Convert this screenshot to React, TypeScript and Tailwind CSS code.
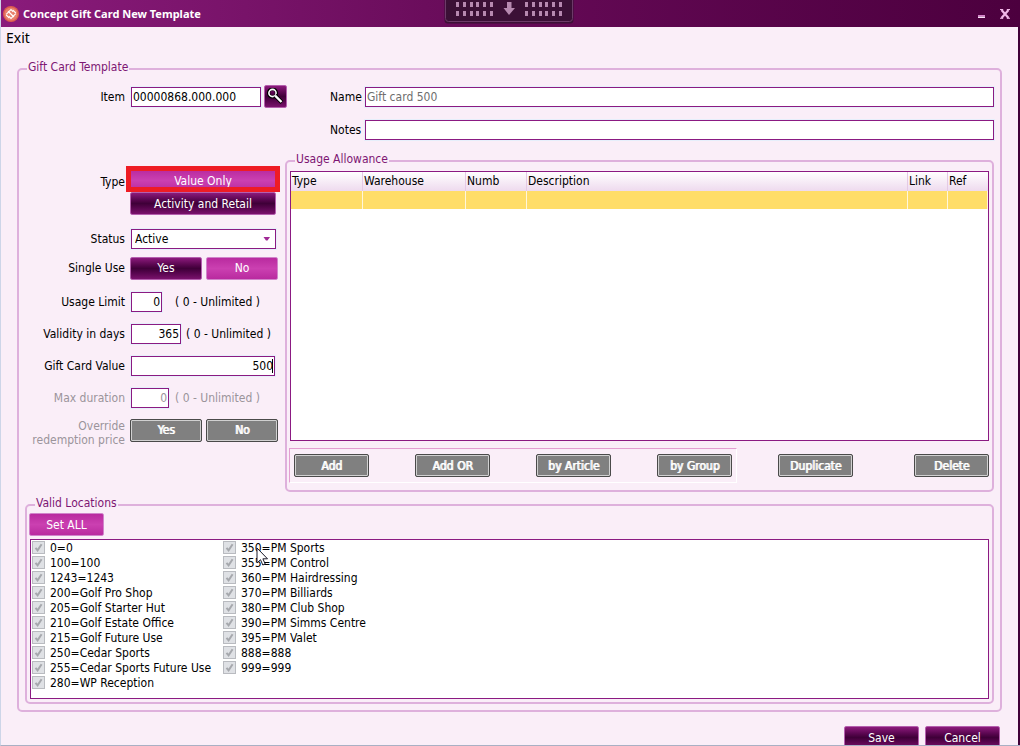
import type { ReactNode } from "react";

const columnOne = [
  "0=0",
  "100=100",
  "1243=1243",
  "200=Golf Pro Shop",
  "205=Golf Starter Hut",
  "210=Golf Estate Office",
  "215=Golf Future Use",
  "250=Cedar Sports",
  "255=Cedar Sports Future Use",
  "280=WP Reception",
];
const columnTwo = [
  "350=PM Sports",
  "355=PM Control",
  "360=PM Hairdressing",
  "370=PM Billiards",
  "380=PM Club Shop",
  "390=PM Simms Centre",
  "395=PM Valet",
  "888=888",
  "999=999",
];

const inputClass =
  "ml-px h-5 border border-[#8b1a82] bg-white px-px leading-none outline-1 outline-[#e6effb]";
const groupClass =
  "flex min-w-0 flex-col rounded-[5px] border-2 border-[#deb0dc]";
const legendClass = "h-4 px-px leading-[13px] text-[#7d1673]";

const tones = {
  dark: "rounded-[2px] border border-[#b45fae] bg-linear-to-b from-[#8c1a7c] via-[#3f0038] to-[#7a126c] text-white",
  bright:
    "rounded-[2px] border border-[#d184cb] bg-linear-to-b from-[#b92a9f] via-[#cb40b1] to-[#b92a9f] text-white",
  gray: "rounded-[2px] border border-[#4a4a4a] bg-[#808080] text-white inset-ring inset-ring-[#d0d0d0] [text-shadow:1px_0_0_#fff]",
};

function Btn({
  tone,
  width,
  children,
}: {
  tone: keyof typeof tones;
  width: string;
  children: ReactNode;
}) {
  return (
    <button
      type="button"
      disabled={tone === "gray"}
      className={`h-[23px] shrink-0 leading-none ${width} ${tones[tone]}`}
    >
      {children}
    </button>
  );
}

function Row({
  label,
  id,
  height = "h-8",
  muted = false,
  children,
}: {
  label: ReactNode;
  id?: string;
  height?: string;
  muted?: boolean;
  children: ReactNode;
}) {
  const labelClass = "w-[101px] shrink-0 pr-px text-right leading-[14px]";
  return (
    <div
      className={`flex items-center gap-1 whitespace-nowrap ${height} ${muted ? "text-[#9b949b]" : ""}`}
    >
      {id ? (
        <label htmlFor={id} className={labelClass}>
          {label}
        </label>
      ) : (
        <span className={labelClass}>{label}</span>
      )}
      {children}
    </div>
  );
}

function Location({ name }: { name: string }) {
  return (
    <label className="flex h-[15px] items-center gap-[5px] whitespace-nowrap">
      <span className="relative size-[13px] shrink-0">
        <input
          type="checkbox"
          defaultChecked
          disabled
          className="block size-[13px] appearance-none border border-[#b9bbc0] bg-[#dfe1e5]"
        />
        <svg viewBox="0 0 13 13" className="absolute inset-0 size-[13px]">
          <path d="M3.5 6.8 5.6 9.4 9.6 3.2" fill="none" stroke="#a6a8ad" strokeWidth="2" />
        </svg>
      </span>
      {name}
    </label>
  );
}

function Grip({ x }: { x: number }) {
  return (
    <>
      {[2, 11].map((y) =>
        [0, 7, 14, 20, 27, 34].map((dx) => (
          <rect key={`${y}-${dx}`} x={x + dx} y={y} width="3" height="5" fill="#b689b0" />
        )),
      )}
    </>
  );
}

function TitleBar() {
  return (
    <header className="relative flex h-[27px] shrink-0 items-center bg-linear-to-r from-[#8a1b7b] via-[#650a56] to-[#4c003e] pl-0.5 text-white">
      <svg viewBox="0 0 16 16" className="size-4">
        <circle cx="8" cy="8" r="8" fill="#dd5d4e" />
        <circle cx="8" cy="8" r="6.6" fill="#e8806d" />
        <g fill="none" stroke="#fff" strokeWidth="1.1">
          <path d="M3.200 8.400 8 3.600 10.200 5.800M12.800 7.600 8 12.400 5.800 10.200" />
          <path d="M5 5.200 9.800 10M6.400 6.400 11 11M9.600 3.800 12.800 7M3.200 9 6.400 12.200" />
        </g>
      </svg>
      <h1 className="ml-1 font-['Noto_Sans','Open_Sans',sans-serif] text-[11px] leading-4 font-bold">
        Concept Gift Card New Template
      </h1>
      <div className="ml-auto flex items-center gap-[14px] pr-2.5">
        <button type="button" aria-label="Minimize">
          <svg viewBox="0 0 8 10" className="h-2.5 w-2">
            <path d="M0 6h7v1.500H0z" fill="#d884ce" />
            <path d="M0 7.500h7V9H0z" fill="#fbe0f7" />
          </svg>
        </button>
        <button type="button" aria-label="Close">
          <svg viewBox="0 0 10 10" className="size-[10px]">
            <path d="M1.500 1 8.500 9M8.500 1 1.500 9" stroke="#f0b6e8" strokeWidth="2.200" />
            <path d="M0 .5h3.200M6.800.5H10M0 9.300h3.200M6.800 9.300H10" stroke="#f0b6e8" />
          </svg>
        </button>
      </div>
      <svg viewBox="0 0 130 24" className="absolute top-0 left-[443px] h-6 w-[130px]">
        <path
          d="M.5 0v20a3.500 3.500 0 0 0 3.500 3.500h122a3.500 3.500 0 0 0 3.500-3.500V0z"
          fill="#3b1036"
        />
        <path
          d="M1.500 0v18.500a3 3 0 0 0 3 3h121a3 3 0 0 0 3-3V0"
          fill="none"
          stroke="#6c3b68"
        />
        <Grip x={12} />
        <Grip x={81} />
        <path d="M63 2h4.500v6H71L65 15 59.500 8H63z" fill="#b689b0" />
      </svg>
    </header>
  );
}

function UsageTable() {
  const th = "border-r border-[#e5c9e5] pl-px text-left font-normal last:border-r-0";
  const cols = ["Type", "Warehouse", "Numb", "Description", "Link", "Ref"];
  return (
    <div className="mx-px min-h-32 flex-1 border border-[#8b1a82] bg-white">
      <table className="w-full table-fixed border-separate border-spacing-0">
        <colgroup>
          <col className="w-[72px]" />
          <col className="w-[103px]" />
          <col className="w-[61px]" />
          <col />
          <col className="w-10" />
          <col className="w-10" />
        </colgroup>
        <thead>
          <tr className="h-[19px] bg-linear-to-b from-white to-[#eedaee] leading-[19px]">
            {cols.map((c) => (
              <th key={c} className={th}>
                {c}
              </th>
            ))}
          </tr>
        </thead>
        <tbody>
          <tr className="h-[18px] bg-[#ffdd68]">
            {cols.map((c) => (
              <td key={c} className="border-r border-[#fff6dc]" />
            ))}
          </tr>
        </tbody>
      </table>
    </div>
  );
}

export default function App() {
  return (
    <div className="flex h-screen min-h-[640px] flex-col overflow-hidden border-b border-l border-b-[#a9b0c4] border-l-[#cdd5e8] bg-[#faeef8] font-['DejaVu_Sans_Condensed','Noto_Sans',sans-serif] text-[12px] text-black">
      <TitleBar />
      <div className="flex min-h-0 flex-1 flex-col border-r-2 border-[#400038]">
        <nav className="flex h-[34px] shrink-0 items-start pt-px pl-[5px]">
          <button type="button" className="font-['Noto_Sans',sans-serif] text-[14px] leading-5">
            Exit
          </button>
        </nav>

        <fieldset className={`mx-4 flex-1 px-1.5 pb-1.5 ${groupClass}`}>
          <legend className={`ml-0.5 ${legendClass}`}>Gift Card Template</legend>

          <div className="flex pt-2">
            <div className="flex w-[305px] shrink-0 items-center self-start">
              <label htmlFor="item" className="mr-1 w-[101px] pr-px text-right">
                Item
              </label>
              <input id="item" defaultValue="00000868.000.000" className={`mr-[3px] w-[130px] ${inputClass}`} />
              <button
                type="button"
                aria-label="Find item"
                className={`flex size-[23px] items-center justify-center ${tones.dark}`}
              >
                <svg viewBox="0 0 17 17" className="size-[17px]" fill="none">
                  <circle cx="5.500" cy="5" r="4" stroke="#000" strokeWidth="3.200" />
                  <circle cx="5.500" cy="5" r="3.600" stroke="#fff" strokeWidth="1.600" />
                  <path d="M8 7.500 15 14.500" stroke="#000" strokeWidth="4" />
                  <path d="M8 7.500 14.500 14" stroke="#fff" strokeWidth="2.400" />
                </svg>
              </button>
            </div>
            <div className="flex flex-1 flex-col gap-[13px] pt-0.5">
              <div className="flex items-center">
                <label htmlFor="name" className="w-[34px] shrink-0">
                  Name
                </label>
                <input id="name" defaultValue="Gift card 500" className={`min-w-0 flex-1 text-[#6e6e6e] ${inputClass}`} />
              </div>
              <div className="flex items-center">
                <label htmlFor="notes" className="w-[34px] shrink-0">
                  Notes
                </label>
                <input id="notes" className={`min-w-0 flex-1 ${inputClass}`} />
              </div>
            </div>
          </div>

          <div className="flex min-h-0 flex-1 pt-[13px]">
            <div className="w-[260px] shrink-0 pt-4">
              <div className="flex gap-1">
                <span className="w-[101px] pt-[5px] pr-px text-right leading-4">Type</span>
                <div className="flex flex-col">
                  <div className="relative flex">
                    <Btn tone="bright" width="w-[146px]">Value Only</Btn>
                    <span className="pointer-events-none absolute -inset-x-1 -top-[3px] bottom-0 border-5 border-[#ee1c24]" />
                  </div>
                  <Btn tone="dark" width="w-[146px]">Activity and Retail</Btn>
                </div>
              </div>
              <div className="h-[9px]" />
              <Row label="Status" id="status" height="h-[30px]">
                <div className="relative">
                  <select id="status" className={`w-[145px] appearance-none pl-[3px] ${inputClass}`}>
                    <option>Active</option>
                  </select>
                  <svg viewBox="0 0 8 4" className="pointer-events-none absolute top-2 right-[5px] h-1 w-2">
                    <path d="M.5 0h6.500L4.500 3.500h-1.500z" fill="#a02a96" />
                  </svg>
                </div>
              </Row>
              <Row label="Single Use" height="h-7">
                <Btn tone="dark" width="w-[72px]">Yes</Btn>
                <Btn tone="bright" width="w-[72px]">No</Btn>
              </Row>
              <div className="h-1" />
              <Row label="Usage Limit" id="limit">
                <input id="limit" defaultValue="0" className={`w-[31px] text-right ${inputClass}`} />
                <span className="pl-[9px]">( 0 - Unlimited )</span>
              </Row>
              <Row label="Validity in days" id="days">
                <input id="days" defaultValue="365" className={`w-[50px] text-right ${inputClass}`} />
                <span className="pl-px">( 0 - Unlimited )</span>
              </Row>
              <Row label="Gift Card Value" id="value">
                <div className="relative">
                  <input id="value" defaultValue="500" className={`w-36 text-right ${inputClass}`} />
                  <span className="absolute top-[3px] right-0.5 h-3.5 w-px bg-black" />
                </div>
              </Row>
              <Row label="Max duration" id="max" muted>
                <input id="max" defaultValue="0" className={`w-[38px] text-right ${inputClass}`} />
                <span className="pl-0.5">( 0 - Unlimited )</span>
              </Row>
              <Row
                muted
                label={
                  <span className="block pt-1.5">
                    Override
                    <br />
                    redemption price
                  </span>
                }
              >
                <Btn tone="gray" width="w-[72px]">Yes</Btn>
                <Btn tone="gray" width="w-[72px]">No</Btn>
              </Row>
            </div>

            <fieldset className={`flex-1 px-0.5 pt-0.5 pb-[7px] ${groupClass}`}>
              <legend className={`ml-1.5 ${legendClass}`}>Usage Allowance</legend>
              <UsageTable />
              <div className="mt-[7px] flex items-center pr-px">
                <div className="flex gap-[46px] border border-t-[#e39fd2] border-r-white border-b-white border-l-[#e39fd2] px-1 py-[5px]">
                  <Btn tone="gray" width="w-[75px]">Add</Btn>
                  <Btn tone="gray" width="w-[75px]">Add OR</Btn>
                  <Btn tone="gray" width="w-[75px]">by Article</Btn>
                  <Btn tone="gray" width="w-[75px]">by Group</Btn>
                </div>
                <div className="flex flex-1 justify-between pl-[41px]">
                  <Btn tone="gray" width="w-[75px]">Duplicate</Btn>
                  <Btn tone="gray" width="w-[75px]">Delete</Btn>
                </div>
              </div>
            </fieldset>
          </div>

          <fieldset className={`mt-[5px] shrink-0 px-0.5 pb-[3px] ${groupClass}`}>
            <legend className={`ml-1.5 ${legendClass}`}>Valid Locations</legend>
            <Btn tone="bright" width="w-[75px]">Set ALL</Btn>
            <div className="relative mx-px mt-[3px] grid grid-cols-[191px_1fr] border border-[#8b1a82] bg-white pb-2 pl-px">
              <div>
                {columnOne.map((n) => (
                  <Location key={n} name={n} />
                ))}
              </div>
              <div>
                {columnTwo.map((n) => (
                  <Location key={n} name={n} />
                ))}
              </div>
              <svg viewBox="0 0 13 20" className="absolute top-[7px] left-[225px] h-5 w-[13px]">
                <path
                  d="M1 1v15l3.500-3.300 2.300 5.300 2.400-1-2.300-5.200H11.500z"
                  fill="#fff"
                  stroke="#1a1a2a"
                />
              </svg>
            </div>
          </fieldset>
        </fieldset>

        <footer className="mt-3.5 mr-[18px] flex h-[19px] shrink-0 items-start justify-end gap-1.5 overflow-hidden">
          <Btn tone="dark" width="w-[75px]">Save</Btn>
          <Btn tone="dark" width="w-[75px]">Cancel</Btn>
        </footer>
      </div>
    </div>
  );
}
